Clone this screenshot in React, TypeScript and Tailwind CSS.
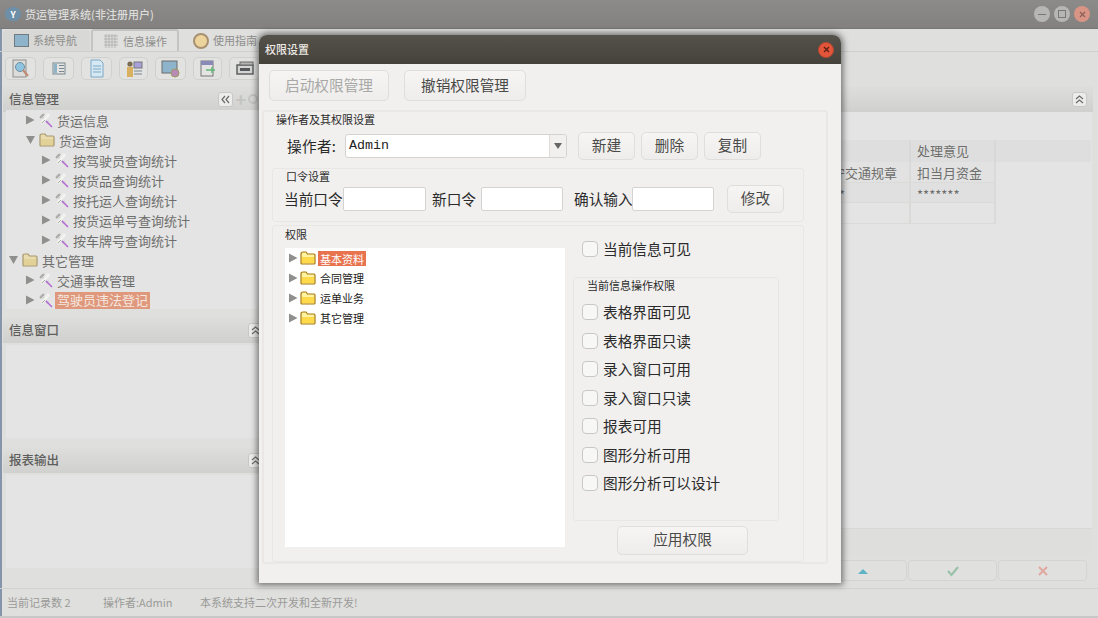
import React from 'react';

function Triangle({ down = false }: { down?: boolean }) {
  return (
    <svg width="9" height="10" viewBox="0 0 9 10" className="shrink-0">
      {down ? <path d="M0 1 L9 1 L4.5 9 Z" fill="#8f8f8d" /> : <path d="M0 0.5 L8.5 5 L0 9.5 Z" fill="#8f8f8d" />}
    </svg>
  );
}

function Folder({ dim = false }: { dim?: boolean }) {
  return (
    <svg width="16" height="14" viewBox="0 0 16 14" className="shrink-0">
      <path d="M1 3 Q1 1 3 1 L6 1 L7.5 3 L14 3 Q15 3 15 4.5 L15 12 Q15 13 14 13 L2 13 Q1 13 1 12 Z" fill={dim ? '#e8dcb0' : '#fff2a0'} stroke={dim ? '#a8976a' : '#a8780c'} strokeWidth="1.2" />
      <path d="M2 6 L14 6 L14 12 L2 12 Z" fill={dim ? '#e2d298' : '#ffd94a'} />
    </svg>
  );
}

function Tools() {
  return (
    <svg width="14" height="15" viewBox="0 0 14 15" className="shrink-0">
      <path d="M2 2 L9 10" stroke="#cfcfcd" strokeWidth="3" strokeDasharray="2 1" />
      <path d="M10 1 L3 10" stroke="#f2f2f0" strokeWidth="3" />
      <path d="M3 10 L6 7" stroke="#a8a8a6" strokeWidth="1" />
      <path d="M1 5 L5 1" stroke="#aaaaa8" strokeWidth="2" />
      <path d="M7 8 L13 14" stroke="#b46ad4" strokeWidth="1.6" />
    </svg>
  );
}

function ToolIcon({ kind }: { kind: number }) {
  const shapes: Record<number, React.ReactNode> = {
    0: (
      <>
        <rect x="2" y="1" width="13" height="17" fill="#dcdcda" stroke="#8f8f8d" />
        <circle cx="9" cy="8" r="4.5" fill="#8ec4e0" stroke="#6d8ea0" />
        <path d="M12 11 L17 17" stroke="#c08870" strokeWidth="2" />
      </>
    ),
    1: (
      <>
        <rect x="4" y="4" width="12" height="11" fill="#e4e4e2" stroke="#77878f" />
        <rect x="5" y="5" width="3" height="9" fill="#8fb4c8" />
        <path d="M10 6.5 H15 M10 9.5 H15 M10 12.5 H15" stroke="#77878f" />
      </>
    ),
    2: (
      <>
        <path d="M4 1 H13 L16 4 V18 H4 Z" fill="#d6e8f2" stroke="#78a8c8" />
        <path d="M6 7 H14 M6 10 H14 M6 13 H14" stroke="#78a8c8" />
      </>
    ),
    3: (
      <>
        <circle cx="6" cy="5" r="2.6" fill="#7a6a50" />
        <rect x="3" y="8" width="6" height="10" fill="#d8b060" />
        <rect x="10" y="3" width="8" height="6" fill="#a8a0d8" stroke="#77777a" />
        <path d="M10 12 H18 M10 15 H18" stroke="#77878f" />
      </>
    ),
    4: (
      <>
        <rect x="1" y="2" width="15" height="12" fill="#8eb4cc" stroke="#6c6c6c" />
        <circle cx="14" cy="14" r="4" fill="#b88ab8" stroke="#9c9c5c" />
      </>
    ),
    5: (
      <>
        <rect x="3" y="2" width="12" height="15" fill="#e4e4e2" stroke="#77777a" />
        <rect x="3" y="2" width="12" height="4" fill="#8a8ab8" />
        <path d="M8 11 H17 M14 8 V14" stroke="#60b878" strokeWidth="1.4" />
      </>
    ),
    6: (
      <>
        <rect x="2" y="6" width="16" height="9" fill="#d4d4d2" stroke="#55585a" strokeWidth="1.4" />
        <rect x="5" y="3" width="13" height="3" fill="#b4b4b2" stroke="#6a6a6a" />
        <rect x="5" y="9" width="10" height="3" fill="#55585a" />
      </>
    ),
  };
  return (
    <svg width="20" height="20" viewBox="0 0 20 20">
      {shapes[kind]}
    </svg>
  );
}

function LeftRow({ level, label, open, folder, selected }: { level: number; label: string; open?: boolean; folder?: boolean; selected?: boolean }) {
  const pad = level === 0 ? 'pl-[3px]' : level === 1 ? 'pl-[20px]' : 'pl-[36px]';
  return (
    <div className={`h-5 shrink-0 flex items-center ${pad}`}>
      <Triangle down={open} />
      {folder ? (
        <span className="ml-[4px] mr-[4px] flex">
          <Folder dim />
        </span>
      ) : (
        <span className="ml-[4px] mr-[4px] flex">
          <Tools />
        </span>
      )}
      <span className={selected ? 'bg-[#e0987c] text-[#f4e8e0] px-[2px] h-[17px] leading-[16px] -ml-[2px]' : ''}>{label}</span>
    </div>
  );
}

function PanelHeader({ title, up, collapse }: { title: string; up?: boolean; collapse?: boolean }) {
  return (
    <div className="h-[26px] shrink-0 flex items-center justify-between bg-gradient-to-b from-[#dededc] to-[#d0d0ce] pl-[6px] pr-[6px] text-[12.5px] font-medium text-[#5e5e5c]">
      <span>{title}</span>
      {collapse && (
        <div className="flex items-center mr-[5px] text-[#c4c4c2]">
          <span className="w-[15px] h-[15px] bg-[#ececea] border border-[#c8c8c6] rounded-[3px] flex items-center justify-center">
            <svg width="9" height="9" viewBox="0 0 9 9">
              <path d="M4 1 L1 4.5 L4 8 M8 1 L5 4.5 L8 8" stroke="#6a6a68" fill="none" strokeWidth="1.2" />
            </svg>
          </span>
          <span className="ml-[2px] text-[18px] font-bold leading-none">+</span>
          <span className="ml-[2px] w-[10px] h-[10px] rounded-full border-2 border-[#c4c4c2]" />
        </div>
      )}
      {up && (
        <span className="w-[15px] h-[15px] bg-[#ececea] border border-[#c8c8c6] rounded-[3px] flex items-center justify-center">
          <svg width="9" height="9" viewBox="0 0 9 9">
            <path d="M1 4 L4.5 1 L8 4 M1 8 L4.5 5 L8 8" stroke="#6a6a68" fill="none" strokeWidth="1.2" />
          </svg>
        </span>
      )}
    </div>
  );
}

function Btn({ label, w, h, disabled }: { label: string; w: string; h: string; disabled?: boolean }) {
  return (
    <button className={`${w} ${h} shrink-0 pb-[2px] rounded-[5px] border border-[#dfdedc] bg-gradient-to-b from-[#f6f5f4] to-[#eeedeb] text-[14.67px] ${disabled ? 'text-[#a8a8a6]' : 'text-[#4a4a48]'}`}>
      {label}
    </button>
  );
}

function Check({ label }: { label: string }) {
  return (
    <div className="flex items-center gap-[5px] text-[14.67px] text-[#2a2a2a]">
      <span className="w-[16px] h-[16px] rounded-[4px] border border-[#c8c8c6] bg-[#f7f7f6]" />
      <span>{label}</span>
    </div>
  );
}

function PwdInput({ w }: { w: string }) {
  return <input className={`${w} h-[24px] shrink-0 bg-white border border-[#d4d3d1] rounded-[2px]`} />;
}

function Dialog() {
  const dialogTree = ['基本资料', '合同管理', '运单业务', '其它管理'];
  const checks = ['表格界面可见', '表格界面只读', '录入窗口可用', '录入窗口只读', '报表可用', '图形分析可用', '图形分析可以设计'];
  return (
    <div className="absolute left-[259px] top-[35px] w-[582px] h-[548px] flex flex-col bg-[#f1f0ee] rounded-t-[8px] shadow-[0_0_6px_2px_rgba(40,40,40,0.6)]">
      <div className="h-[29px] shrink-0 rounded-t-[8px] bg-gradient-to-b from-[#55524c] to-[#45423c] flex items-center justify-between pl-[6px] pr-[7px] text-[11px] font-medium text-[#eeeae4]">
        <span>权限设置</span>
        <span className="w-[16px] h-[16px] rounded-full bg-[#e2553a] border border-[#b84830] flex items-center justify-center">
          <svg width="7" height="7" viewBox="0 0 7 7">
            <path d="M1 1 L6 6 M6 1 L1 6" stroke="#5a2018" strokeWidth="1.3" />
          </svg>
        </span>
      </div>

      <div className="flex gap-[15px] pt-[6px] pl-[10px]">
        <Btn label="启动权限管理" w="w-[120px]" h="h-[31px]" disabled />
        <Btn label="撤销权限管理" w="w-[122px]" h="h-[31px]" />
      </div>

      <div className="ml-[3px] mt-[9px] w-[566px] h-[454px] border-2 border-[#e9e8e6] rounded-[3px] flex flex-col">
        <div className="pl-[12px] h-[15px] leading-[14px] text-[11px] text-[#2a2a2a]">操作者及其权限设置</div>
        <div className="mt-[5px] h-[28px] flex items-center pl-[23px]">
          <span className="w-[58px] shrink-0 text-[14.67px] text-[#2a2a2a] tracking-[0.3px]">操作者:</span>
          <div className="w-[222px] h-[24px] shrink-0 bg-white border border-[#d4d3d1] rounded-[3px] flex items-center justify-between pl-[3px]">
            <span className="font-['Liberation_Mono',monospace] text-[13.33px] text-[#222]">Admin</span>
            <span className="w-[17px] h-full border-l border-[#dddcda] bg-[#f1f0ee] rounded-r-[3px] flex items-center justify-center">
              <svg width="8" height="6" viewBox="0 0 8 6">
                <path d="M0 0 H8 L4 6 Z" fill="#666664" />
              </svg>
            </span>
          </div>
          <div className="ml-[11px] flex gap-[6px]">
            <Btn label="新建" w="w-[57px]" h="h-[28px]" />
            <Btn label="删除" w="w-[57px]" h="h-[28px]" />
            <Btn label="复制" w="w-[57px]" h="h-[28px]" />
          </div>
        </div>

        <div className="ml-[8px] mt-[8px] w-[532px] h-[54px] border border-[#e8e7e5] rounded-[3px]">
          <div className="pl-[13px] h-[16px] leading-[14px] text-[11px] text-[#2a2a2a]">口令设置</div>
          <div className="h-[28px] flex items-center pl-[11px] text-[14.67px] text-[#2a2a2a] whitespace-nowrap">
            <span className="w-[59px] shrink-0">当前口令</span>
            <PwdInput w="w-[83px]" />
            <span className="ml-[6px] w-[49px] shrink-0">新口令</span>
            <PwdInput w="w-[82px]" />
            <span className="ml-[11px] w-[58px] shrink-0">确认输入</span>
            <PwdInput w="w-[82px]" />
            <span className="ml-[13px]">
              <Btn label="修改" w="w-[57px]" h="h-[28px]" />
            </span>
          </div>
        </div>

        <div className="ml-[8px] mt-[3px] w-[532px] h-[338px] border border-[#e8e7e5] rounded-[3px] flex">
          <div className="pl-[12px] flex flex-col">
            <div className="h-[16px] leading-[16px] text-[11px] text-[#2a2a2a]">权限</div>
            <div className="mt-[6px] w-[280px] h-[299px] bg-white text-[11px] text-[#1a1a1a] pl-[4px]">
              {dialogTree.map((label, i) => (
                <div key={label} className="h-5 flex items-center">
                  <Triangle />
                  <span className="ml-[2px] flex">
                    <Folder />
                  </span>
                  <span className={i === 0 ? 'ml-[2px] mt-[1px] px-[2px] h-[15px] leading-[17px] overflow-hidden bg-[#e8734f] text-white' : 'ml-[4px] mt-[1px]'}>{label}</span>
                </div>
              ))}
            </div>
          </div>
          <div className="ml-[8px] flex flex-col">
            <div className="mt-[15px] pl-[9px] h-[16px] flex items-center">
              <Check label="当前信息可见" />
            </div>
            <div className="mt-[20px] w-[206px] h-[244px] border border-[#e8e7e5] rounded-[3px]">
              <div className="pl-[13px] h-[16px] leading-[14px] text-[11px] text-[#2a2a2a]">当前信息操作权限</div>
              <div className="mt-[4px] pl-[8px] flex flex-col">
                {checks.map((label) => (
                  <div key={label} className="h-[28.5px] flex items-center">
                    <Check label={label} />
                  </div>
                ))}
              </div>
            </div>
            <div className="mt-[5px] ml-[44px]">
              <Btn label="应用权限" w="w-[131px]" h="h-[29px]" />
            </div>
          </div>
        </div>
      </div>
    </div>
  );
}

export default function App() {
  const tree = [
    { level: 1, label: '货运信息' },
    { level: 1, label: '货运查询', open: true, folder: true },
    { level: 2, label: '按驾驶员查询统计' },
    { level: 2, label: '按货品查询统计' },
    { level: 2, label: '按托运人查询统计' },
    { level: 2, label: '按货运单号查询统计' },
    { level: 2, label: '按车牌号查询统计' },
    { level: 0, label: '其它管理', open: true, folder: true },
    { level: 1, label: '交通事故管理' },
    { level: 1, label: '驾驶员违法登记', selected: true },
  ];

  return (
    <div className="relative w-[1098px] h-[618px] overflow-hidden flex flex-col bg-[#dfdfdd] font-['Noto_Sans_CJK_SC',sans-serif] shadow-[inset_2px_0_0_#8494aa]">
      {/* title bar */}
      <div className="h-[29px] shrink-0 bg-gradient-to-b from-[#8c8b89] to-[#82817f] border-b border-[#777] flex items-center justify-between pl-[5px] pr-[8px]">
        <div className="flex items-center gap-[4px] text-[11px] font-medium text-[#dcdcda]">
          <span className="w-[16px] h-[14px] rounded-full bg-[#6d8fa8] flex items-center justify-center text-[9px] font-bold leading-none text-white">Y</span>
          <span>货运管理系统(非注册用户)</span>
        </div>
        <div className="flex gap-[4px]">
          <span className="w-[16px] h-[16px] rounded-full bg-[#b6b6b4] flex items-center justify-center">
            <span className="w-[8px] h-px bg-[#777]" />
          </span>
          <span className="w-[16px] h-[16px] rounded-full bg-[#b6b6b4] flex items-center justify-center">
            <span className="w-[8px] h-[8px] border border-[#777]" />
          </span>
          <span className="w-[16px] h-[16px] rounded-full bg-[#d89484] flex items-center justify-center">
            <svg width="7" height="7" viewBox="0 0 7 7">
              <path d="M1 1 L6 6 M6 1 L1 6" stroke="#8a6058" strokeWidth="1.2" />
            </svg>
          </span>
        </div>
      </div>

      {/* tabs */}
      <div className="h-[23px] shrink-0 flex items-end border-b border-[#cfcfcd] text-[11px] text-[#8e8e8c] pl-[3px]">
        <div className="w-[87px] h-[21px] flex items-center pl-[11px] gap-[4px] bg-[#d8d8d6] rounded-t-[3px]">
          <span className="w-[15px] h-[13px] border border-[#707a80] bg-[#8eb4cc]" />
          <span>系统导航</span>
        </div>
        <div className="ml-px w-[88px] h-[22px] flex items-center pl-[11px] gap-[5px] bg-[#e0e0de] border-2 border-b-0 border-[#c4c4c2] rounded-t-[3px]">
          <svg width="14" height="14" viewBox="0 0 14 14">
            <path d="M0 2 H14 M0 5 H14 M0 8 H14 M0 11 H14 M2 0 V14 M5 0 V14 M8 0 V14 M11 0 V14" stroke="#b4b4b2" />
          </svg>
          <span>信息操作</span>
        </div>
        <div className="ml-[14px] h-[21px] flex items-center gap-[4px]">
          <span className="w-[16px] h-[16px] rounded-full bg-[#ecd49c] border-2 border-[#a89070]" />
          <span>使用指南</span>
        </div>
      </div>

      {/* toolbar */}
      <div className="h-[34px] shrink-0 flex items-center pl-[5px] gap-[7px] pb-[1px]">
        {[31, 31, 31, 29, 31, 29, 31].map((w, i) => (
          <div key={i} style={{ width: w }} className="h-[23px] rounded-[5px] border border-[#d0d0ce] bg-[#e2e2e0] flex items-center justify-center">
            <ToolIcon kind={i} />
          </div>
        ))}
      </div>

      {/* main */}
      <div className="flex-1 flex min-h-0 pl-[3px] pr-[5px]">
        <div className="w-[266px] shrink-0 flex flex-col">
          <PanelHeader title="信息管理" collapse />
          <div className="h-[199px] shrink-0 bg-[#e4e4e4] ml-[3px] overflow-hidden text-[13px] leading-none text-[#6e6e6c] mt-[-2px]">
            <div className="flex flex-col">
              {tree.map((r) => (
                <LeftRow key={r.label} {...r} />
              ))}
            </div>
          </div>
          <div className="mt-[8px]">
            <PanelHeader title="信息窗口" up />
          </div>
          <div className="mt-[2px] h-[93px] bg-[#e4e4e4] ml-[3px]" />
          <div className="mt-[9px]">
            <PanelHeader title="报表输出" up />
          </div>
          <div className="mt-[2px] h-[93px] bg-[#e4e4e4] ml-[3px]" />
        </div>

        <div className="flex-1 ml-[3px] flex flex-col">
          <PanelHeader title="" up />
          <div className="flex-1 bg-[#e4e4e4] pt-[28px] text-[13px] text-[#6e6e6c] mr-[1px]">
            <div className="grid grid-cols-[638px_85px_95px] ml-[1px]">
              <div className="h-[22px] bg-[#dedede] border-r-2 border-[#d8d8d6]" />
              <div className="h-[22px] bg-[#dedede] border-r-2 border-[#d8d8d6] pl-[6px] leading-[22px]">处理意见</div>
              <div className="h-[22px] bg-[#dedede]" />
              <div className="h-[21px] bg-[#e2e2e2] border-r-2 border-b border-[#dadad8] leading-[21px] text-right pr-[12px]">遵守交通规章</div>
              <div className="h-[21px] bg-[#e2e2e2] border-r-2 border-b border-[#dadad8] pl-[6px] leading-[21px]">扣当月资金</div>
              <div />
              <div className="h-[20px] bg-[#e0e0e0] border-r-2 border-b border-[#dadad8] leading-[24px] text-right pr-[64px]">*******</div>
              <div className="h-[20px] bg-[#e0e0e0] border-r-2 border-b border-[#dadad8] pl-[6px] leading-[24px]">*******</div>
              <div />
              <div className="h-[21px] border-r-2 border-b border-[#dadad8]" />
              <div className="h-[21px] border-r-2 border-b border-[#dadad8]" />
              <div />
            </div>
          </div>
          <div className="h-[28px] shrink-0 bg-[#dededc] border-t border-[#d8d8d6] mr-[1px]" />
          <div className="h-[21px] shrink-0 mt-[4px] flex justify-end gap-px pr-[6px]">
            {[
              <path key="up" d="M1 9 L6 4 L11 9 Z" fill="#5cb4c4" />,
              <path key="ok" d="M1 6 L4.5 10 L11 2" stroke="#98c0a8" strokeWidth="2" fill="none" />,
              <path key="no" d="M2 2 L10 10 M10 2 L2 10" stroke="#e0a8a0" strokeWidth="2" fill="none" />,
            ].map((icon, i) => (
              <div key={i} className="w-[89px] rounded-[4px] border border-[#d4d4d2] bg-[#e0e0de] flex items-center justify-center">
                <svg width="12" height="12" viewBox="0 0 12 12">
                  {icon}
                </svg>
              </div>
            ))}
          </div>
          <div className="h-[7px] shrink-0" />
        </div>
      </div>

      {/* status bar */}
      <div className="h-[30px] shrink-0 border-t border-[#d2d2d0] flex items-center pl-[7px] text-[11px] text-[#9a9a98] border-b-2 border-b-[#c8c8c8]">
        <span className="w-[96px]">当前记录数 2</span>
        <span className="w-[97px]">操作者:Admin</span>
        <span>本系统支持二次开发和全新开发!</span>
      </div>

      <Dialog />
    </div>
  );
}
